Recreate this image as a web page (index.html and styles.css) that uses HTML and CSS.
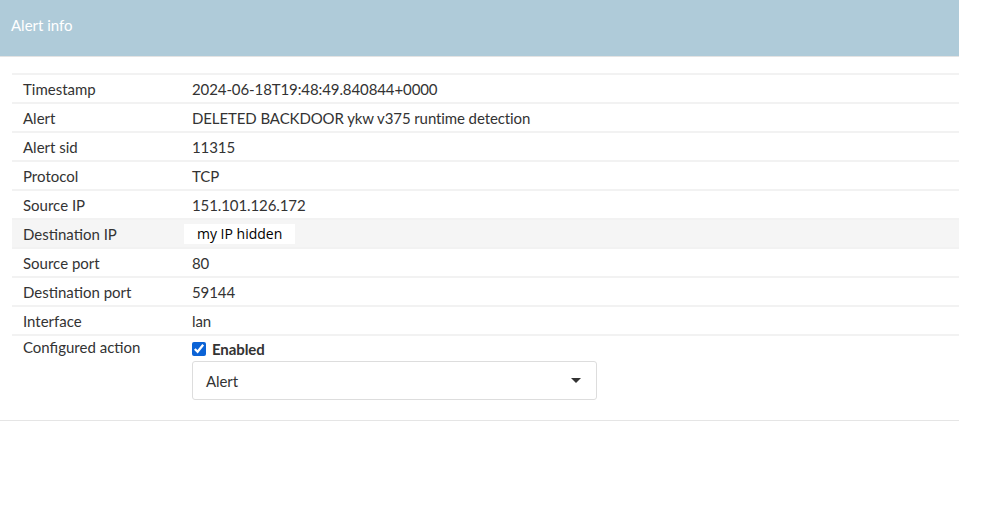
FILE: index.html
```html
<!DOCTYPE html>
<html lang="en">
<head>
    <meta charset="UTF-8">
    <meta name="viewport" content="width=device-width, initial-scale=1.0">
    <title>Alert info</title>
    <link rel="stylesheet" href="styles.css">
</head>
<body>
    <section class="panel">
        <header class="panel-heading">Alert info</header>
        <div class="panel-body">
            <table class="info-table">
                <tr><td class="label">Timestamp</td><td>2024-06-18T19:48:49.840844+0000</td></tr>
                <tr><td class="label">Alert</td><td>DELETED BACKDOOR ykw v375 runtime detection</td></tr>
                <tr><td class="label">Alert sid</td><td>11315</td></tr>
                <tr><td class="label">Protocol</td><td>TCP</td></tr>
                <tr><td class="label">Source IP</td><td>151.101.126.172</td></tr>
                <tr class="hover"><td class="label">Destination IP</td><td><span class="redacted">my IP hidden</span></td></tr>
                <tr><td class="label">Source port</td><td>80</td></tr>
                <tr><td class="label">Destination port</td><td>59144</td></tr>
                <tr><td class="label">Interface</td><td>lan</td></tr>
                <tr>
                    <td class="label">Configured action</td>
                    <td>
                        <label class="check">
                            <input type="checkbox" checked>
                            <span>Enabled</span>
                        </label>
                        <div class="select">
                            <span>Alert</span>
                            <span class="caret"></span>
                        </div>
                    </td>
                </tr>
            </table>
        </div>
    </section>
</body>
</html>
```

FILE: styles.css
```css
body {
    font-family: "Source Sans Pro", Lato, "Noto Sans", sans-serif;
    background-color: #ffffff;
    margin: 0;
    padding: 0;
    color: #333333;
    font-size: 15px;
}
.panel {
    width: 959px;
    border-bottom: 1px solid #e5e5e5;
}
.panel-heading {
    background-color: #afcbd9;
    color: #ffffff;
    height: 57px;
    line-height: 50px;
    padding: 0 11px;
    font-size: 15px;
    border-bottom: 1px solid #e3e3e3;
    box-sizing: border-box;
}
.panel-body {
    padding: 16px 0 20px 12px;
}
.info-table {
    width: 100%;
    border-collapse: collapse;
}
.info-table tr {
    border-top: 2px solid #f2f2f2;
}
.info-table td {
    height: 27px;
    padding: 0 0 0 11px;
    vertical-align: middle;
    letter-spacing: -0.1px;
}
.info-table td.label {
    width: 158px;
    letter-spacing: 0;
}
.info-table tr:last-child td {
    vertical-align: top;
    padding-top: 2px;
}
.hover {
    background-color: #f5f5f5;
}
.redacted {
    display: inline-block;
    background-color: #ffffff;
    color: #000000;
    font-family: "Open Sans", "Noto Sans", sans-serif;
    font-size: 14px;
    letter-spacing: 0;
    padding: 0 13px;
    margin-left: -8px;
    line-height: 20px;
}
.check {
    display: flex;
    align-items: center;
    gap: 6px;
    font-weight: bold;
    height: 22px;
}
.check input {
    margin: 0;
    width: 14px;
    height: 14px;
    accent-color: #0b63d6;
}
.select {
    margin-top: 1px;
    width: 405px;
    height: 39px;
    box-sizing: border-box;
    border: 1px solid #dddddd;
    border-radius: 3px;
    display: flex;
    align-items: center;
    justify-content: space-between;
    padding: 0 15px 0 13px;
}
.caret {
    width: 0;
    height: 0;
    border-left: 5px solid transparent;
    border-right: 5px solid transparent;
    border-top: 5px solid #333333;
}
```
